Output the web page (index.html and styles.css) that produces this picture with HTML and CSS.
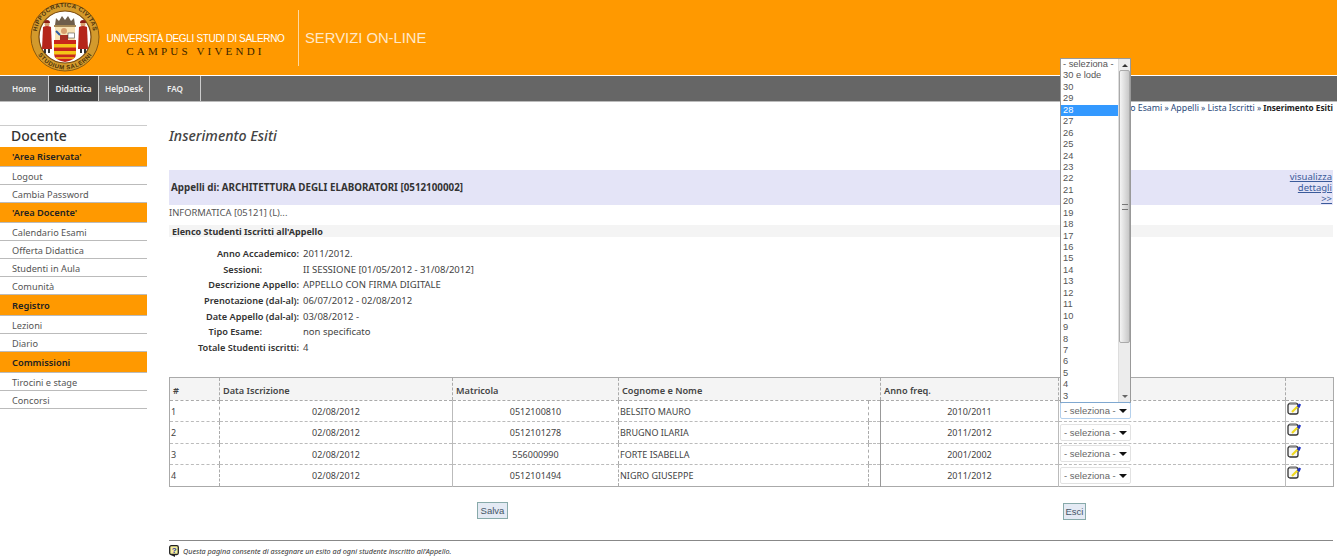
FILE: index.html
```html
<!DOCTYPE html>
<html lang="it">
<head>
<meta charset="utf-8">
<title>Inserimento Esiti</title>
<link rel="stylesheet" href="styles.css">
</head>
<body>
<header class="top">
  <svg class="seal" width="76" height="75" viewBox="0 0 76 75">
    <defs><path id="arcTop" d="M10.500 43 A28.500 28.500 0 1 1 65.500 43"/><path id="arcBot" d="M6.500 43 A32 32 0 0 0 69.500 43"/></defs>
    <circle cx="38" cy="37" r="34" fill="#d39a2c" stroke="#8a5a10" stroke-width="1"/>
    <circle cx="38" cy="37" r="26" fill="#fff" stroke="#7a4a10" stroke-width="1.200"/>
    <text class="seal-text"><textPath href="#arcTop" startOffset="50%" text-anchor="middle">HIPPOCRATICA CIVITAS</textPath></text>
    <text class="seal-text"><textPath href="#arcBot" startOffset="50%" text-anchor="middle">STUDIUM SALERNI</textPath></text>
    <path d="M28 25 l1-7 3 3 3-5 3 4 3-4 3 5 3-3 1 7z" fill="#6f5f4c"/>
    <rect x="27" y="25" width="22" height="2" fill="#a88a58"/>
    <path d="M28 27h20v13H28z" fill="#f7e3b5"/>
    <circle cx="37" cy="31" r="3" fill="#d9a070"/>
    <path d="M33 40v-5h8v5z" fill="#a83024"/>
    <path d="M29 31l4 4" stroke="#2a5ca8" stroke-width="2"/>
    <rect x="41" y="33" width="6.500" height="5" fill="#fff" stroke="#333" stroke-width=".5"/>
    <path d="M27 40h22v14q0 6-11 8-11-2-11-8z" fill="#c9281c"/>
    <path d="M27 44h22v3.500H27zM27 51h22v3.500H27z" fill="#f5c518"/>
    <path d="M29 58h18" stroke="#f5c518" stroke-width="1.500"/>
    <circle cx="20" cy="24" r="2.500" fill="#d9a070"/><path d="M17 23a3 3 0 0 1 6 0z" fill="#8e1f16"/>
    <path d="M16 27q4-2 8 0l1 22h-10z" fill="#b5261b"/><path d="M17 49h2v4h-2zM21 49h2v4h-2z" fill="#333"/>
    <circle cx="56" cy="24" r="2.500" fill="#d9a070"/><path d="M53 23a3 3 0 0 1 6 0z" fill="#8e1f16"/>
    <path d="M52 27q4-2 8 0l1 22h-10z" fill="#b5261b"/><path d="M53 49h2v4h-2zM57 49h2v4h-2z" fill="#333"/>
  </svg>
  <div class="brand">
    <div class="brand-name">UNIVERSITÀ DEGLI STUDI DI SALERNO</div>
    <div class="brand-motto">CAMPUS VIVENDI</div>
  </div>
  <div class="service">SERVIZI ON-LINE</div>
</header>

<nav class="tabs">
  <a class="tab tab-home">Home</a>
  <a class="tab tab-active">Didattica</a>
  <a class="tab">HelpDesk</a>
  <a class="tab">FAQ</a>
</nav>

<div class="page">
  <aside class="side">
    <h2 class="side-title">Docente</h2>
    <div class="side-head">'Area Riservata'</div>
    <a class="side-link">Logout</a>
    <a class="side-link">Cambia Password</a>
    <div class="side-head">'Area Docente'</div>
    <a class="side-link">Calendario Esami</a>
    <a class="side-link">Offerta Didattica</a>
    <a class="side-link">Studenti in Aula</a>
    <a class="side-link">Comunità</a>
    <div class="side-head side-head-tall">Registro</div>
    <a class="side-link">Lezioni</a>
    <a class="side-link">Diario</a>
    <div class="side-head side-head-tall">Commissioni</div>
    <a class="side-link">Tirocini e stage</a>
    <a class="side-link">Concorsi</a>
  </aside>

  <main class="content">
    <div class="crumbs"><a>Calendario Esami</a> » <a>Appelli</a> » <a>Lista Iscritti</a> » <b>Inserimento Esiti</b></div>
    <h1 class="title">Inserimento Esiti</h1>
    <div class="band">
      <b>Appelli di: ARCHITETTURA DEGLI ELABORATORI [0512100002]</b>
      <a class="details">visualizza dettagli &gt;&gt;</a>
    </div>
    <div class="course">INFORMATICA [05121] (L)...</div>
    <div class="subhead">Elenco Studenti Iscritti all'Appello</div>
    <dl class="info">
      <dt>Anno Accademico:</dt><dd>2011/2012.</dd>
      <dt class="short">Sessioni:</dt><dd>II SESSIONE [01/05/2012 - 31/08/2012]</dd>
      <dt>Descrizione Appello:</dt><dd>APPELLO CON FIRMA DIGITALE</dd>
      <dt>Prenotazione (dal-al):</dt><dd>06/07/2012 - 02/08/2012</dd>
      <dt>Date Appello (dal-al):</dt><dd>03/08/2012 -</dd>
      <dt class="short">Tipo Esame:</dt><dd>non specificato</dd>
      <dt>Totale Studenti iscritti:</dt><dd>4</dd>
    </dl>

    <table class="grid">
      <colgroup>
        <col class="c1"><col class="c2"><col class="c3"><col class="c4"><col class="c5"><col class="c6"><col class="c7"><col class="c8">
      </colgroup>
      <thead>
        <tr><th>#</th><th>Data Iscrizione</th><th>Matricola</th><th colspan="2">Cognome e Nome</th><th>Anno freq.</th><th></th><th></th></tr>
      </thead>
      <tbody>
        <tr>
          <td>1</td><td class="mid">02/08/2012</td><td class="mid">0512100810</td><td>BELSITO MAURO</td><td></td><td class="mid">2010/2011</td>
          <td class="pick-cell"><span class="pick pick-focus"><select><option>- seleziona -</option></select></span></td>
          <td class="icon-cell"><svg class="note" width="14" height="13" viewBox="0 0 14 13"><rect x="1" y="1.500" width="10" height="10.500" rx="2" fill="#f6f6f6" stroke="#333" stroke-width="1.300"/><path d="M2.500 1.500h7" stroke="#888" stroke-width="2"/><path d="M5 10l5.500-5.500" stroke="#efd81e" stroke-width="2.200"/><path d="M10 4.500l2-3 2 1-1.500 3.500z" fill="#1c2fc8"/></svg></td>
        </tr>
        <tr>
          <td>2</td><td class="mid">02/08/2012</td><td class="mid">0512101278</td><td>BRUGNO ILARIA</td><td></td><td class="mid">2011/2012</td>
          <td class="pick-cell"><span class="pick"><select><option>- seleziona -</option></select></span></td>
          <td class="icon-cell"><svg class="note" width="14" height="13" viewBox="0 0 14 13"><rect x="1" y="1.500" width="10" height="10.500" rx="2" fill="#f6f6f6" stroke="#333" stroke-width="1.300"/><path d="M2.500 1.500h7" stroke="#888" stroke-width="2"/><path d="M5 10l5.500-5.500" stroke="#efd81e" stroke-width="2.200"/><path d="M10 4.500l2-3 2 1-1.500 3.500z" fill="#1c2fc8"/></svg></td>
        </tr>
        <tr>
          <td>3</td><td class="mid">02/08/2012</td><td class="mid">556000990</td><td>FORTE ISABELLA</td><td></td><td class="mid">2001/2002</td>
          <td class="pick-cell"><span class="pick"><select><option>- seleziona -</option></select></span></td>
          <td class="icon-cell"><svg class="note" width="14" height="13" viewBox="0 0 14 13"><rect x="1" y="1.500" width="10" height="10.500" rx="2" fill="#f6f6f6" stroke="#333" stroke-width="1.300"/><path d="M2.500 1.500h7" stroke="#888" stroke-width="2"/><path d="M5 10l5.500-5.500" stroke="#efd81e" stroke-width="2.200"/><path d="M10 4.500l2-3 2 1-1.500 3.500z" fill="#1c2fc8"/></svg></td>
        </tr>
        <tr>
          <td>4</td><td class="mid">02/08/2012</td><td class="mid">0512101494</td><td>NIGRO GIUSEPPE</td><td></td><td class="mid">2011/2012</td>
          <td class="pick-cell"><span class="pick"><select><option>- seleziona -</option></select></span></td>
          <td class="icon-cell"><svg class="note" width="14" height="13" viewBox="0 0 14 13"><rect x="1" y="1.500" width="10" height="10.500" rx="2" fill="#f6f6f6" stroke="#333" stroke-width="1.300"/><path d="M2.500 1.500h7" stroke="#888" stroke-width="2"/><path d="M5 10l5.500-5.500" stroke="#efd81e" stroke-width="2.200"/><path d="M10 4.500l2-3 2 1-1.500 3.500z" fill="#1c2fc8"/></svg></td>
        </tr>
      </tbody>
    </table>

    <div class="actions">
      <button class="btn btn-save">Salva</button>
      <button class="btn btn-exit">Esci</button>
    </div>

    <footer class="help">
      <svg width="11" height="12" viewBox="0 0 11 12"><rect x=".7" y=".7" width="8.600" height="8.800" rx="1.500" fill="#f6ee9a" stroke="#222" stroke-width="1.300"/><path d="M2 10h4v2z" fill="#222"/><text x="2.700" y="8" class="help-q">?</text></svg>
      <span>Questa pagina consente di assegnare un esito ad ogni studente inscritto all'Appello.</span>
    </footer>
  </main>
</div>

<div class="listbox">
  <ul class="options">
    <li>- seleziona -</li><li>30 e lode</li><li>30</li><li>29</li><li class="sel">28</li><li>27</li><li>26</li><li>25</li><li>24</li><li>23</li><li>22</li><li>21</li><li>20</li><li>19</li><li>18</li><li>17</li><li>16</li><li>15</li><li>14</li><li>13</li><li>12</li><li>11</li><li>10</li><li>9</li><li>8</li><li>7</li><li>6</li><li>5</li><li>4</li><li>3</li>
  </ul>
  <div class="scroll">
    <span class="arrow arrow-up"></span>
    <div class="thumb"><span class="grip"></span></div>
    <span class="arrow arrow-down"></span>
  </div>
</div>
</body>
</html>
```
FILE: styles.css
```css
* { box-sizing: border-box; }
html, body { margin: 0; padding: 0; height: 557px; overflow: hidden; background: #fff; }
body { font-family: "Noto Sans", "DejaVu Sans", sans-serif; font-size: 9.5px; color: #444; position: relative; }
a { color: inherit; }

.top { height: 76px; background: #f90; display: flex; align-items: center; padding-left: 27px; border-bottom: 1px solid #fff; }
.seal { flex: none; }
.seal-text { font-family: "Liberation Sans", sans-serif; font-size: 6px; font-weight: 700; fill: #4a3008; letter-spacing: .55px; }
.brand { margin-left: 4px; width: 192px; padding-right: 14px; border-right: 1px solid #ffd9a0; height: 56px; display: flex; flex-direction: column; justify-content: center; align-items: center; padding-top: 15px; }
.brand-name { color: #fff; font-family: "Liberation Sans", sans-serif; font-size: 10px; letter-spacing: -.33px; white-space: nowrap; line-height: 13px; }
.brand-motto { color: #3a2500; font-family: "Liberation Serif", serif; font-size: 11px; letter-spacing: 3.2px; line-height: 13px; }
.service { margin-left: 6px; color: #ffe8c8; font-family: "Liberation Sans", sans-serif; font-size: 14.8px; line-height: 20px; }

.tabs { height: 26px; background: #666; border-bottom: 1px solid #bbb; display: flex; }
.tab { width: 51px; color: #eee; font-size: 8.2px; font-weight: 600; line-height: 25px; text-align: center; border-right: 1px solid #ccc; }
.tab-home { width: 49px; }
.tab-active { width: 50px; background: #444; }

.page { display: flex; }
.side { width: 147px; flex: none; padding-top: 23px; }
.side-title { margin: 0; height: 22px; border-top: 1px solid #ccc; padding-left: 11px; font-size: 14px; font-weight: 500; line-height: 19px; color: #333; }
.side-head { height: 20px; background: #f90; border-bottom: 1px solid #bbb; color: #222; font-size: 9.3px; font-weight: 600; line-height: 19px; padding-left: 12px; }
.side-head-tall { height: 21px; line-height: 21px; }
.side-link { display: block; height: 18px; border-bottom: 1px solid #bbb; color: #555; font-size: 9.2px; line-height: 20px; padding-left: 12px; }

.content { margin-left: 22px; width: 1164px; flex: none; }
.crumbs { height: 22px; text-align: right; font-size: 8.2px; line-height: 12px; color: #2a4a7a; white-space: nowrap; }
.crumbs a { color: #2a4a7a; font-size: 8.8px; }
.crumbs b { color: #222; }
.title { margin: 0; height: 46px; font-size: 14.2px; font-weight: 500; font-style: italic; color: #444; line-height: 20px; padding-top: 2px; }
.band { height: 35px; background: #e4e4f7; display: flex; justify-content: space-between; align-items: center; padding-left: 2px; color: #333; font-size: 9.8px; }
.details { width: 44px; margin-right: 1px; text-align: right; color: #3a5a9a; text-decoration: underline; line-height: 11px; font-size: 9.5px; }
.course { height: 20px; line-height: 13px; padding-top: 1px; color: #555; font-size: 9.4px; }
.subhead { height: 12px; background: #f4f4f4; padding-left: 3px; font-weight: 700; line-height: 13px; color: #333; font-size: 9px; }
.info { margin: 9px 0 0; display: grid; grid-template-columns: 130px 1fr; column-gap: 4px; grid-auto-rows: 15.67px; line-height: 15.67px; }
.info dt { font-weight: 600; font-size: 9.2px; text-align: right; color: #333; }
.info dt.short { padding-right: 37px; }
.info dd { margin: 0; color: #444; }

.grid { margin-top: 21px; width: 1164px; table-layout: fixed; border-collapse: collapse; border: 1px solid #aaa; }
.c1 { width: 50px; } .c2 { width: 233px; } .c3 { width: 166px; } .c4 { width: 250px; } .c5 { width: 12px; } .c6 { width: 178px; } .c7 { width: 227px; } .c8 { width: 48px; }
.grid th { height: 23px; background: #f4f4f4; font-weight: 600; text-align: left; padding: 3px 4px 0 3px; color: #444; font-size: 9.2px; border-left: 1px dashed #aaa; border-bottom: 1px dashed #aaa; }
.grid td { height: 21.500px; padding: 1px 1px 0; font-size: 9px; color: #444; border-left: 1px dashed #aaa; border-bottom: 1px dashed #bbb; }
.grid td:nth-child(3) { border-left: 1px solid #bbb; }
.grid td:nth-child(6) { border-left: 1px solid #999; }
.grid td:nth-child(7), .grid td:nth-child(8) { border-left: 1px solid #bbb; }
.grid .mid { text-align: center; }
.grid .pick-cell { padding-top: 0; }
.grid .icon-cell { vertical-align: top; padding-top: 1px; }
.pick { display: inline-block; position: relative; width: 71px; height: 17px; vertical-align: middle; }
.pick::after { content: ""; position: absolute; right: 4px; top: 7px; border: 4px solid transparent; border-top: 4px solid #111; border-bottom: 0; pointer-events: none; }
.pick select { appearance: none; width: 100%; height: 100%; border: 1px solid #e2e2e2; border-radius: 2px; background: #fff; font: 9.5px "Liberation Sans", sans-serif; color: #666; padding: 0 0 0 3px; }
.pick-focus select { border-color: #b4d0ec; }
.note { display: block; }

.actions { display: flex; align-items: flex-start; margin-top: 15px; height: 38px; }
.btn { height: 17px; padding: 0; background: #e4eaf4; border: 1px solid #8aa; color: #456; font: 9.5px "Liberation Sans", sans-serif; }
.btn-save { width: 31px; margin-left: 308px; }
.btn-exit { width: 23px; margin-left: 555px; margin-top: 1px; }

.help { border-top: 1px solid #888; display: flex; align-items: center; gap: 3px; padding-top: 4px; font-size: 7.25px; font-style: italic; color: #333; }
.help svg { flex: none; }
.help-q { font: 700 8px "Liberation Sans", sans-serif; fill: #1c2fa8; }

.listbox { position: absolute; left: 1060px; top: 58px; width: 71px; height: 345px; background: #fff; border: 1px solid #999; border-bottom-color: #7fa8d0; display: flex; overflow: hidden; }
.options { flex: 1; min-width: 0; list-style: none; margin: 0; padding: 0; font: 9.3px/11.450px "Liberation Sans", sans-serif; color: #555; }
.options li { height: 11.450px; padding-left: 2px; white-space: nowrap; }
.options .sel { background: #3399ff; color: #fff; }
.scroll { flex: none; width: 12px; background: #ececec; border-left: 1px solid #ddd; display: flex; flex-direction: column; align-items: center; }
.arrow { width: 0; height: 0; border: 3px solid transparent; flex: none; }
.arrow-up { border-top: 0; border-bottom: 3px solid #333; margin-top: 5px; }
.arrow-down { border-bottom: 0; border-top: 3px solid #666; margin-bottom: 4px; }
.thumb { flex: none; width: 11px; height: 273px; margin-top: 3px; margin-bottom: auto; border: 1px solid #aaa; border-radius: 2px; background: linear-gradient(to right, #f4f4f4, #c8c8c8); display: flex; align-items: center; justify-content: center; }
.grip { width: 6px; height: 6px; border-top: 1px solid #777; border-bottom: 1px solid #777; }
```
